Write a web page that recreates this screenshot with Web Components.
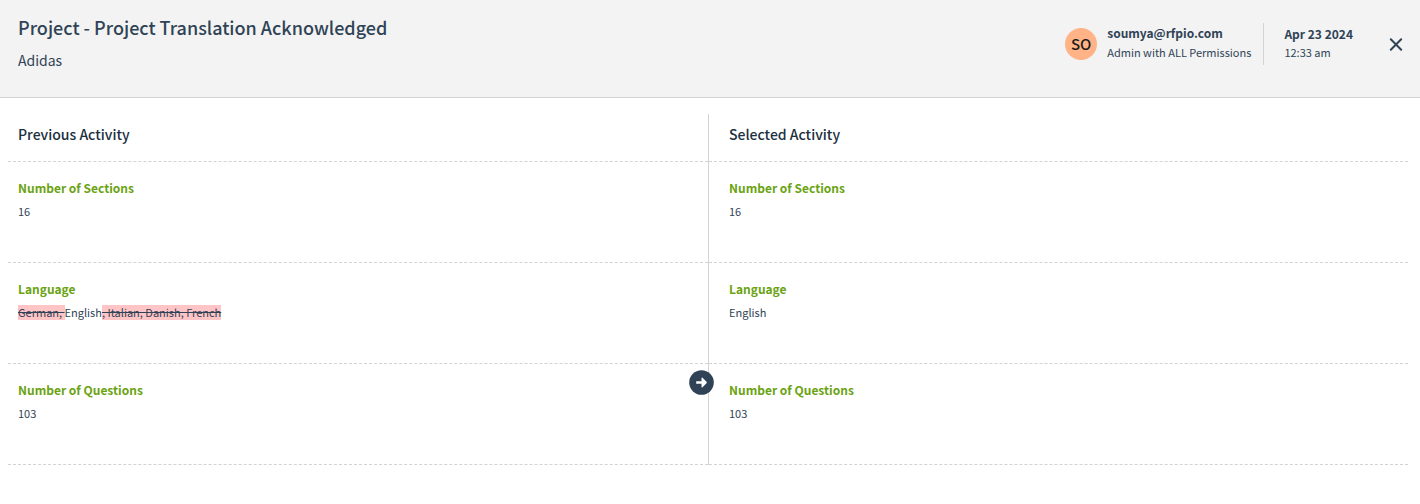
<!DOCTYPE html>
<html lang="en">
<head>
<meta charset="utf-8">
<title>Project - Project Translation Acknowledged</title>
<style>
  body {
    margin: 0;
    background: #fff;
    color: #304356;
    font-family: "Noto Sans CJK SC", "Open Sans", sans-serif;
  }
</style>
</head>
<body>
<activity-dialog></activity-dialog>

<template id="user-badge">
  <style>
    :host { display: flex; align-items: center; gap: 10px; }
    .avatar {
      width: 32px; height: 32px; border-radius: 50%;
      background: #ffb387; color: #1c1c1c;
      font-size: 15px; font-weight: 500; line-height: 32px; text-align: center;
    }
    .text { padding-bottom: 4px; }
    .name { font-size: 12px; font-weight: 700; line-height: 20px; }
    .role { font-size: 11px; line-height: 18px; }
  </style>
  <div class="avatar" aria-hidden="true"><slot name="initials"></slot></div>
  <div class="text">
    <div class="name"><slot name="name"></slot></div>
    <div class="role"><slot name="role"></slot></div>
  </div>
</template>

<template id="activity-header">
  <style>
    :host { display: block; }
    header {
      display: flex; justify-content: space-between; align-items: flex-start;
      padding: 11px 14px 23px 18px;
      background: #f3f3f3; border-bottom: 1px solid #d3d3d3;
    }
    h1 { margin: 0; font-size: 18px; font-weight: 500; line-height: 32px; }
    p { margin: 0; padding-top: 3px; font-size: 14px; line-height: 28px; }
    .meta { display: flex; align-items: center; padding-top: 12px; }
    .when {
      margin-left: 12px; padding: 1px 0 5px 20px; border-left: 1px solid #d3d3d3;
    }
    time { display: block; }
    .date { font-size: 12px; font-weight: 700; line-height: 20px; }
    .time { font-size: 11px; line-height: 16px; }
    button {
      display: flex; margin: 0 0 0 33px; padding: 0; border: 0;
      background: none; color: inherit; cursor: pointer;
    }
  </style>
  <header>
    <div>
      <h1><slot name="title"></slot></h1>
      <p><slot name="project"></slot></p>
    </div>
    <div class="meta">
      <user-badge>
        <span slot="initials">SO</span>
        <span slot="name">soumya@rfpio.com</span>
        <span slot="role">Admin with ALL Permissions</span>
      </user-badge>
      <div class="when">
        <time class="date" datetime="2024-04-23">Apr 23 2024</time>
        <time class="time" datetime="00:33">12:33 am</time>
      </div>
      <button type="button" aria-label="Close">
        <svg width="20" height="20" viewBox="0 0 20 20" fill="none" stroke="currentColor" stroke-width="2" stroke-linecap="round"><path d="M4.8 5.2 15.2 15.8M15.2 5.2 4.8 15.8"/></svg>
      </button>
    </div>
  </header>
</template>

<template id="activity-field">
  <style>
    :host {
      display: block; box-sizing: border-box; min-height: 101px;
      padding: 16px 10px 24px var(--inset, 10px); border-bottom: 1px dashed #d3d3d3;
    }
    h3 { margin: 0; font-size: 12px; font-weight: 700; line-height: 20px; color: #6aa312; }
    .value { padding-top: 4px; font-size: 11px; line-height: 18px; }
  </style>
  <h3><slot name="label"></slot></h3>
  <div class="value"><slot></slot></div>
</template>

<template id="activity-column">
  <style>
    :host { display: block; }
    h2 {
      margin: 0; padding: 8px 10px 15px var(--inset, 10px); border-bottom: 1px dashed #d3d3d3;
      color: #1b2f3f; font-size: 14px; font-weight: 500; line-height: 24px;
    }
  </style>
  <section>
    <h2><slot name="heading"></slot></h2>
    <slot></slot>
  </section>
</template>

<template id="activity-dialog">
  <style>
    :host { display: block; }
    main {
      display: grid; grid-template-columns: 1fr 1fr;
      padding: 16px 12px 38px 8px;
    }
    .selected { --inset: 20px; position: relative; border-left: 1px solid #d3d3d3; }
    del { display: inline-block; background: #ffc4c6; line-height: 15px; white-space: pre; }
    .arrow { position: absolute; left: -20px; bottom: 70px; display: block; }
  </style>
  <activity-header>
    <span slot="title">Project - Project Translation Acknowledged</span>
    <span slot="project">Adidas</span>
  </activity-header>
  <main>
    <activity-column>
      <span slot="heading">Previous Activity</span>
      <activity-field><span slot="label">Number of Sections</span>16</activity-field>
      <activity-field><span slot="label">Language</span><del>German, </del>English<del>, Italian, Danish, French</del></activity-field>
      <activity-field><span slot="label">Number of Questions</span>103</activity-field>
    </activity-column>
    <activity-column class="selected">
      <span slot="heading">Selected Activity</span>
      <activity-field><span slot="label">Number of Sections</span>16</activity-field>
      <activity-field><span slot="label">Language</span>English</activity-field>
      <activity-field><span slot="label">Number of Questions</span>103</activity-field>
      <svg class="arrow" width="25" height="25" viewBox="0 0 25 25" aria-hidden="true"><circle cx="12.5" cy="12.5" r="12.3" fill="#304356"/><path d="M7.2 11.2h5.3V8.3c0-.7.6-.9 1-.5l4 4c.4.4.4 1 0 1.4l-4 4c-.4.4-1 .2-1-.5v-2.9H7.2z" fill="#fff"/></svg>
    </activity-column>
  </main>
</template>

<script>
  for (const name of ["user-badge", "activity-header", "activity-field", "activity-column", "activity-dialog"]) {
    const template = document.getElementById(name);
    customElements.define(name, class extends HTMLElement {
      constructor() {
        super();
        this.attachShadow({ mode: "open" }).append(template.content.cloneNode(true));
      }
    });
  }
</script>
</body>
</html>
